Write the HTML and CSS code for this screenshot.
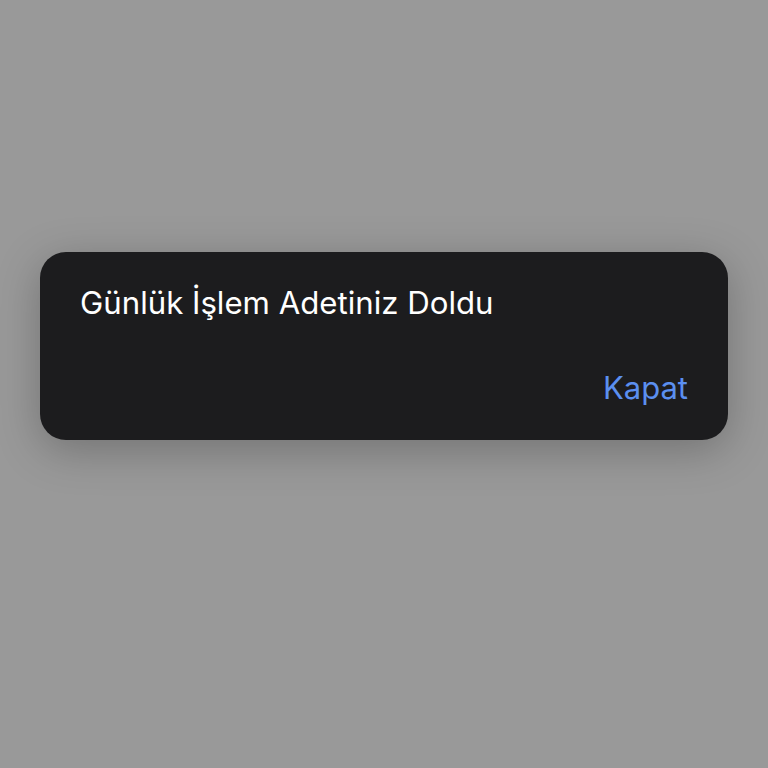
FILE: index.html
```html
<!DOCTYPE html>
<html lang="tr">
<head>
<meta charset="utf-8">
<link rel="stylesheet" href="styles.css">
</head>
<body>
<div class="screen">
  <div class="alert">
    <div class="message">Günlük İşlem Adetiniz Doldu</div>
    <div class="actions"><span class="btn">Kapat</span></div>
  </div>
</div>
</body>
</html>
```
FILE: styles.css
```css
html, body {
  margin: 0;
  padding: 0;
  width: 768px;
  height: 768px;
  background: #999999;
}
.screen {
  width: 768px;
  height: 768px;
  display: flex;
  align-items: flex-start;
  justify-content: center;
  padding-top: 252px;
  box-sizing: border-box;
}
.alert {
  width: 688px;
  height: 188px;
  box-sizing: border-box;
  background: #1c1c1e;
  border-radius: 26px;
  box-shadow: 0 10px 44px rgba(0,0,0,0.25);
  padding: 31px 40px 0 40px;
  display: flex;
  flex-direction: column;
  font-family: Inter, "Noto Sans", sans-serif;
}
.message {
  color: #ffffff;
  font-size: 31.2px;
  line-height: 40px;
}
.actions {
  display: flex;
  justify-content: flex-end;
  margin-top: 45px;
}
.btn {
  color: #5b8ff0;
  font-size: 31px;
  line-height: 40px;
}
```
